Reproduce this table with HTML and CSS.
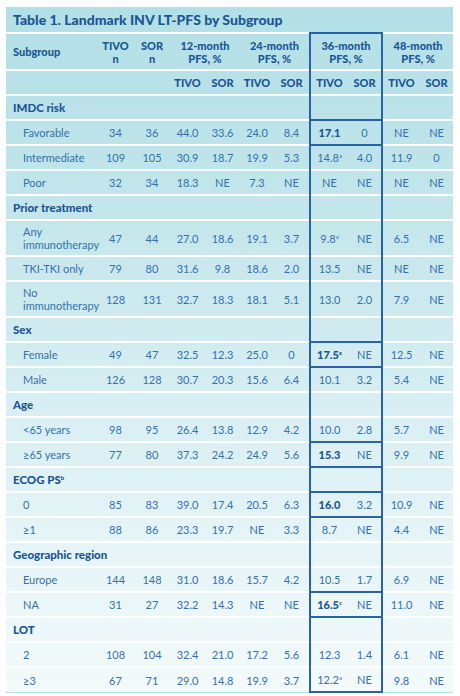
FILE: index.html
```html
<!DOCTYPE html>
<html lang="en">
<head>
    <meta charset="UTF-8">
    <meta name="viewport" content="width=device-width, initial-scale=1.0">
    <title>Table 1. Landmark INV LT-PFS by Subgroup</title>
    <link rel="stylesheet" href="styles.css">
</head>
<body>
    <table class="pfs-table">
        <colgroup>
            <col style="width:91px"><col style="width:37px"><col style="width:36px">
            <col style="width:35px"><col style="width:35px"><col style="width:34px"><col style="width:36px">
            <col style="width:38px"><col style="width:34px"><col style="width:38px"><col style="width:33px">
        </colgroup>
        <tr class="title-row">
            <td colspan="11">Table 1. Landmark INV LT-PFS by Subgroup</td>
        </tr>
        <tr class="head-row">
            <th class="label">Subgroup</th>
            <th>TIVO<br>n</th>
            <th>SOR<br>n</th>
            <th colspan="2">12-month<br>PFS, %</th>
            <th colspan="2">24-month<br>PFS, %</th>
            <th colspan="2" class="box-l box-r box-t">36-month<br>PFS, %</th>
            <th colspan="2">48-month<br>PFS, %</th>
        </tr>
        <tr class="sub-row">
            <th></th><th></th><th></th>
            <th>TIVO</th><th>SOR</th><th>TIVO</th><th>SOR</th>
            <th class="box-l">TIVO</th><th class="box-r">SOR</th>
            <th>TIVO</th><th>SOR</th>
        </tr>

        <tr class="cat"><td colspan="7">IMDC risk</td><td class="box-l"></td><td class="box-r"></td><td colspan="2"></td></tr>
        <tr class="hl"><td class="item">Favorable</td><td>34</td><td>36</td><td>44.0</td><td>33.6</td><td>24.0</td><td>8.4</td><td class="box-l"><b>17.1</b></td><td class="box-r">0</td><td>NE</td><td>NE</td></tr>
        <tr><td class="item">Intermediate</td><td>109</td><td>105</td><td>30.9</td><td>18.7</td><td>19.9</td><td>5.3</td><td class="box-l">14.8<sup>a</sup></td><td class="box-r">4.0</td><td>11.9</td><td>0</td></tr>
        <tr><td class="item">Poor</td><td>32</td><td>34</td><td>18.3</td><td>NE</td><td>7.3</td><td>NE</td><td class="box-l">NE</td><td class="box-r">NE</td><td>NE</td><td>NE</td></tr>

        <tr class="cat"><td colspan="7">Prior treatment</td><td class="box-l"></td><td class="box-r"></td><td colspan="2"></td></tr>
        <tr class="tall"><td class="item">Any<br>immunotherapy</td><td>47</td><td>44</td><td>27.0</td><td>18.6</td><td>19.1</td><td>3.7</td><td class="box-l">9.8<sup>a</sup></td><td class="box-r">NE</td><td>6.5</td><td>NE</td></tr>
        <tr><td class="item">TKI-TKI only</td><td>79</td><td>80</td><td>31.6</td><td>9.8</td><td>18.6</td><td>2.0</td><td class="box-l">13.5</td><td class="box-r">NE</td><td>NE</td><td>NE</td></tr>
        <tr class="tall"><td class="item">No<br>immunotherapy</td><td>128</td><td>131</td><td>32.7</td><td>18.3</td><td>18.1</td><td>5.1</td><td class="box-l">13.0</td><td class="box-r">2.0</td><td>7.9</td><td>NE</td></tr>

        <tr class="cat"><td colspan="7">Sex</td><td class="box-l"></td><td class="box-r"></td><td colspan="2"></td></tr>
        <tr class="hl"><td class="item">Female</td><td>49</td><td>47</td><td>32.5</td><td>12.3</td><td>25.0</td><td>0</td><td class="box-l"><b>17.5<sup>a</sup></b></td><td class="box-r">NE</td><td>12.5</td><td>NE</td></tr>
        <tr><td class="item">Male</td><td>126</td><td>128</td><td>30.7</td><td>20.3</td><td>15.6</td><td>6.4</td><td class="box-l">10.1</td><td class="box-r">3.2</td><td>5.4</td><td>NE</td></tr>

        <tr class="cat"><td colspan="7">Age</td><td class="box-l"></td><td class="box-r"></td><td colspan="2"></td></tr>
        <tr><td class="item">&lt;65 years</td><td>98</td><td>95</td><td>26.4</td><td>13.8</td><td>12.9</td><td>4.2</td><td class="box-l">10.0</td><td class="box-r">2.8</td><td>5.7</td><td>NE</td></tr>
        <tr class="hl"><td class="item">≥65 years</td><td>77</td><td>80</td><td>37.3</td><td>24.2</td><td>24.9</td><td>5.6</td><td class="box-l"><b>15.3</b></td><td class="box-r">NE</td><td>9.9</td><td>NE</td></tr>

        <tr class="cat"><td colspan="7">ECOG PS<sup>b</sup></td><td class="box-l"></td><td class="box-r"></td><td colspan="2"></td></tr>
        <tr class="hl"><td class="item">0</td><td>85</td><td>83</td><td>39.0</td><td>17.4</td><td>20.5</td><td>6.3</td><td class="box-l"><b>16.0</b></td><td class="box-r">3.2</td><td>10.9</td><td>NE</td></tr>
        <tr><td class="item">≥1</td><td>88</td><td>86</td><td>23.3</td><td>19.7</td><td>NE</td><td>3.3</td><td class="box-l">8.7</td><td class="box-r">NE</td><td>4.4</td><td>NE</td></tr>

        <tr class="cat"><td colspan="7">Geographic region</td><td class="box-l"></td><td class="box-r"></td><td colspan="2"></td></tr>
        <tr><td class="item">Europe</td><td>144</td><td>148</td><td>31.0</td><td>18.6</td><td>15.7</td><td>4.2</td><td class="box-l">10.5</td><td class="box-r">1.7</td><td>6.9</td><td>NE</td></tr>
        <tr class="hl"><td class="item">NA</td><td>31</td><td>27</td><td>32.2</td><td>14.3</td><td>NE</td><td>NE</td><td class="box-l"><b>16.5<sup>c</sup></b></td><td class="box-r">NE</td><td>11.0</td><td>NE</td></tr>

        <tr class="cat"><td colspan="7">LOT</td><td class="box-l"></td><td class="box-r"></td><td colspan="2"></td></tr>
        <tr><td class="item">2</td><td>108</td><td>104</td><td>32.4</td><td>21.0</td><td>17.2</td><td>5.6</td><td class="box-l">12.3</td><td class="box-r">1.4</td><td>6.1</td><td>NE</td></tr>
        <tr class="last"><td class="item">≥3</td><td>67</td><td>71</td><td>29.0</td><td>14.8</td><td>19.9</td><td>3.7</td><td class="box-l">12.2<sup>a</sup></td><td class="box-r">NE</td><td>9.8</td><td>NE</td></tr>
    </table>
</body>
</html>
```

FILE: styles.css
```css
body {
    margin: 0;
    padding: 7px 0 0 6px;
    background: #fff;
    font-family: Lato, "Open Sans", sans-serif;
    color: #3470ad;
}
.pfs-table {
    width: 447px;
    table-layout: fixed;
    border-collapse: collapse;
    background: linear-gradient(to bottom, #b2dfe6 0%, #c3e6eb 30%, #d9eff3 60%, #f3fafb 100%);
    font-size: 11px;
}
.pfs-table tr {
    border-top: 2px solid #fff;
}
.pfs-table tr:first-child {
    border-top: none;
}
.pfs-table td,
.pfs-table th {
    padding: 0;
    text-align: center;
    vertical-align: middle;
    height: 23px;
    white-space: nowrap;
}
.title-row td {
    height: 25px;
    text-align: left;
    padding-left: 7px;
    font-weight: 900;
    font-size: 14px;
    color: #1b5694;
}
.head-row th {
    height: 35px;
    font-weight: 900;
    font-size: 11px;
    line-height: 13px;
    color: #1b5694;
}
.head-row th.label {
    text-align: left;
    padding-left: 7px;
}
.sub-row th {
    font-weight: 900;
    color: #1b5694;
}
.cat td {
    font-weight: 900;
    font-size: 11.5px;
    color: #1b5694;
}
.cat td:first-child {
    text-align: left;
    padding-left: 7px;
}
.pfs-table td.item {
    text-align: left;
    padding-left: 17px;
}
.tall td {
    height: 34px;
    line-height: 13px;
}
.pfs-table b {
    font-weight: 900;
    color: #1b5694;
}
sup {
    font-size: 6px;
    line-height: 0;
    vertical-align: 4px;
}
.pfs-table .box-l {
    border-left: 2px solid #2963a3;
}
.pfs-table .box-r {
    border-right: 2px solid #2963a3;
}
.pfs-table .box-t {
    border-top: 2px solid #2963a3;
}
.hl .box-l,
.hl .box-r {
    border-top: 2px solid #2963a3;
    border-bottom: 2px solid #2963a3;
}
.last .box-l,
.last .box-r {
    border-bottom: 2px solid #2963a3;
}
```
